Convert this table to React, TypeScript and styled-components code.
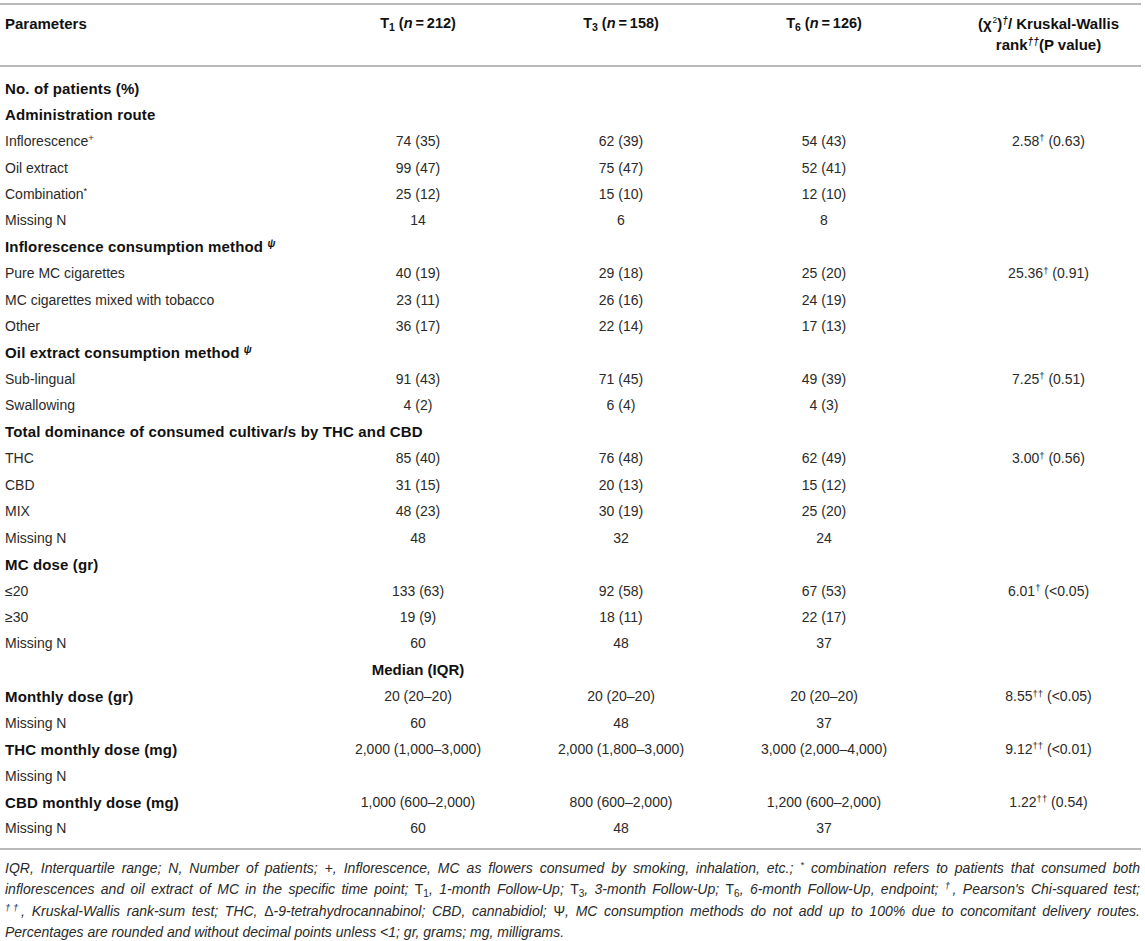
import React from "react";
import styled, { createGlobalStyle } from "styled-components";

const GlobalStyle = createGlobalStyle`
  html, body {
    margin: 0;
    padding: 0;
    background: #ffffff;
  }
  body {
    font-family: "Liberation Sans", Arial, Helvetica, sans-serif;
    color: #262626;
  }
`;

type Row = {
  label: React.ReactNode;
  head?: boolean;
  cells?: React.ReactNode[];
  stat?: React.ReactNode;
};

const Dag = ({ n = 1, it = false }: { n?: number; it?: boolean }) => (
  <Sup $italic={it}>{"\u2020".repeat(n)}</Sup>
);

const Psi = () => <Sup $italic>{"\u03C8"}</Sup>;

const TS = "\u2009"; // thin space around "="

// built lazily: the styled parts are declared at the bottom of the file
const getRows = (): Row[] => [
  { label: "No. of patients (%)", head: true },
  { label: "Administration route", head: true },
  { label: <>Inflorescence<Sup>+</Sup></>, cells: ["74 (35)", "62 (39)", "54 (43)"], stat: <>2.58<Dag /> (0.63)</> },
  { label: "Oil extract", cells: ["99 (47)", "75 (47)", "52 (41)"] },
  { label: <>Combination<Sup>*</Sup></>, cells: ["25 (12)", "15 (10)", "12 (10)"] },
  { label: "Missing N", cells: ["14", "6", "8"] },
  { label: <>Inflorescence consumption method <Psi /></>, head: true },
  { label: "Pure MC cigarettes", cells: ["40 (19)", "29 (18)", "25 (20)"], stat: <>25.36<Dag /> (0.91)</> },
  { label: "MC cigarettes mixed with tobacco", cells: ["23 (11)", "26 (16)", "24 (19)"] },
  { label: "Other", cells: ["36 (17)", "22 (14)", "17 (13)"] },
  { label: <>Oil extract consumption method <Psi /></>, head: true },
  { label: "Sub-lingual", cells: ["91 (43)", "71 (45)", "49 (39)"], stat: <>7.25<Dag /> (0.51)</> },
  { label: "Swallowing", cells: ["4 (2)", "6 (4)", "4 (3)"] },
  { label: "Total dominance of consumed cultivar/s by THC and CBD", head: true },
  { label: "THC", cells: ["85 (40)", "76 (48)", "62 (49)"], stat: <>3.00<Dag /> (0.56)</> },
  { label: "CBD", cells: ["31 (15)", "20 (13)", "15 (12)"] },
  { label: "MIX", cells: ["48 (23)", "30 (19)", "25 (20)"] },
  { label: "Missing N", cells: ["48", "32", "24"] },
  { label: "MC dose (gr)", head: true },
  { label: "\u226420", cells: ["133 (63)", "92 (58)", "67 (53)"], stat: <>6.01<Dag /> (&lt;0.05)</> },
  { label: "\u226530", cells: ["19 (9)", "18 (11)", "22 (17)"] },
  { label: "Missing N", cells: ["60", "48", "37"] },
  { label: "", cells: [<Strong key="m">Median (IQR)</Strong>, "", ""] },
  { label: "Monthly dose (gr)", head: true, cells: ["20 (20\u201320)", "20 (20\u201320)", "20 (20\u201320)"], stat: <>8.55<Dag n={2} /> (&lt;0.05)</> },
  { label: "Missing N", cells: ["60", "48", "37"] },
  { label: "THC monthly dose (mg)", head: true, cells: ["2,000 (1,000\u20133,000)", "2,000 (1,800\u20133,000)", "3,000 (2,000\u20134,000)"], stat: <>9.12<Dag n={2} /> (&lt;0.01)</> },
  { label: "Missing N" },
  { label: "CBD monthly dose (mg)", head: true, cells: ["1,000 (600\u20132,000)", "800 (600\u20132,000)", "1,200 (600\u20132,000)"], stat: <>1.22<Dag n={2} /> (0.54)</> },
  { label: "Missing N", cells: ["60", "48", "37"] },
];

const App = () => {
  const rows = getRows();
  return (
    <Page>
      <GlobalStyle />
      <Table>
        <HeadRow>
          <HeadCell $left>Parameters</HeadCell>
          <HeadCell $time>T<Sub>1</Sub> (<i>n</i>{TS}={TS}212)</HeadCell>
          <HeadCell $time>T<Sub>3</Sub> (<i>n</i>{TS}={TS}158)</HeadCell>
          <HeadCell $time>T<Sub>6</Sub> (<i>n</i>{TS}={TS}126)</HeadCell>
          <HeadCell $stat>
            ({"\u03C7"}<SmallSup>2</SmallSup>)<Dag it />/ Kruskal-Wallis
            <br />
            rank<Dag n={2} it />(P value)
          </HeadCell>
        </HeadRow>
        <Body>
          {rows.map((r, i) => (
            <BodyRow key={i}>
              <Label $bold={!!r.head}>{r.label}</Label>
              {[0, 1, 2].map((c) => (
                <Cell key={c}>{r.cells ? r.cells[c] : ""}</Cell>
              ))}
              <StatCell>{r.stat}</StatCell>
            </BodyRow>
          ))}
        </Body>
      </Table>
      <Notes>
        <NoteLine>
          IQR, Interquartile range; N, Number of patients; <Up>+</Up>, Inflorescence, MC as flowers consumed by
          smoking, inhalation, etc.; <Sup $italic>*</Sup> combination refers to patients that consumed both
        </NoteLine>
        <NoteLine>
          inflorescences and oil extract of MC in the specific time point; <Up>T<Sub>1</Sub></Up>, 1-month
          Follow-Up; <Up>T<Sub>3</Sub></Up>, 3-month Follow-Up; <Up>T<Sub>6</Sub></Up>, 6-month Follow-Up,
          endpoint; <Dag it />, Pearson's Chi-squared test;
        </NoteLine>
        <NoteLine>
          <Dag n={2} it />, Kruskal-Wallis rank-sum test; THC, <Up>{"\u0394"}</Up>-9-tetrahydrocannabinol;
          CBD, cannabidiol; <Up>{"\u03A8"}</Up>, MC consumption methods do not add up to 100% due to concomitant
          delivery routes.
        </NoteLine>
        <NoteLine $last>
          Percentages are rounded and without decimal points unless &lt;1; gr, grams; mg, milligrams.
        </NoteLine>
      </Notes>
    </Page>
  );
};

export default App;

const Page = styled.div`
  width: 1141px;
  padding-top: 3px;
  font-size: 14px;
`;

const Table = styled.div`
  border-top: 2px solid #b9b9b9;
`;

const HeadRow = styled.div`
  display: grid;
  grid-template-columns: 316px 204px 202px 204px 1fr;
  padding: 8px 0 10px;
  border-bottom: 2px solid #b9b9b9;
  line-height: 21px;
  font-size: 15px;
  font-weight: bold;
  color: #111;
`;

const HeadCell = styled.div<{ $left?: boolean; $stat?: boolean; $time?: boolean }>`
  text-align: ${(p) => (p.$left ? "left" : "center")};
  padding-left: ${(p) => (p.$left ? "5px" : p.$stat ? "30px" : "0")};
  font-size: ${(p) => (p.$time ? "14.5px" : "15px")};
  i {
    font-style: italic;
  }
`;

const Body = styled.div`
  padding: 8px 0 6px;
  border-bottom: 2px solid #b9b9b9;
`;

const BodyRow = styled.div`
  display: grid;
  grid-template-columns: 316px 204px 202px 204px 1fr;
  align-items: center;
  height: 26.45px;
  white-space: nowrap;
`;

const Label = styled.div<{ $bold: boolean }>`
  padding-left: 5px;
  font-size: ${(p) => (p.$bold ? "15px" : "14px")};
  letter-spacing: ${(p) => (p.$bold ? "0.15px" : "0")};
  font-weight: ${(p) => (p.$bold ? "bold" : "normal")};
  color: ${(p) => (p.$bold ? "#111" : "#2a2a2a")};
`;

const Cell = styled.div`
  text-align: center;
  color: #2a2a2a;
`;

const StatCell = styled(Cell)`
  padding-left: 30px;
`;

const Strong = styled.span`
  font-size: 15px;
  font-weight: bold;
  color: #111;
`;

const Sup = styled.sup<{ $italic?: boolean }>`
  font-size: 0.68em;
  line-height: 0;
  vertical-align: baseline;
  position: relative;
  top: -0.5em;
  font-style: ${(p) => (p.$italic ? "italic" : "normal")};
`;

const SmallSup = styled.sup`
  font-size: 0.55em;
  font-weight: normal;
  line-height: 0;
  vertical-align: baseline;
  position: relative;
  top: -0.7em;
  padding-left: 1px;
`;

const Sub = styled.sub`
  font-size: 0.72em;
  line-height: 0;
  vertical-align: baseline;
  position: relative;
  top: 0.25em;
  font-style: normal;
`;

const Up = styled.span`
  font-style: normal;
`;

const Notes = styled.div`
  padding: 8px 1px 0 5px;
  font-style: italic;
  font-size: 14px;
  line-height: 21.5px;
  color: #2a2a2a;
`;

const NoteLine = styled.div<{ $last?: boolean }>`
  text-align: justify;
  text-align-last: ${(p) => (p.$last ? "left" : "justify")};
  white-space: ${(p) => (p.$last ? "normal" : "nowrap")};
`;
